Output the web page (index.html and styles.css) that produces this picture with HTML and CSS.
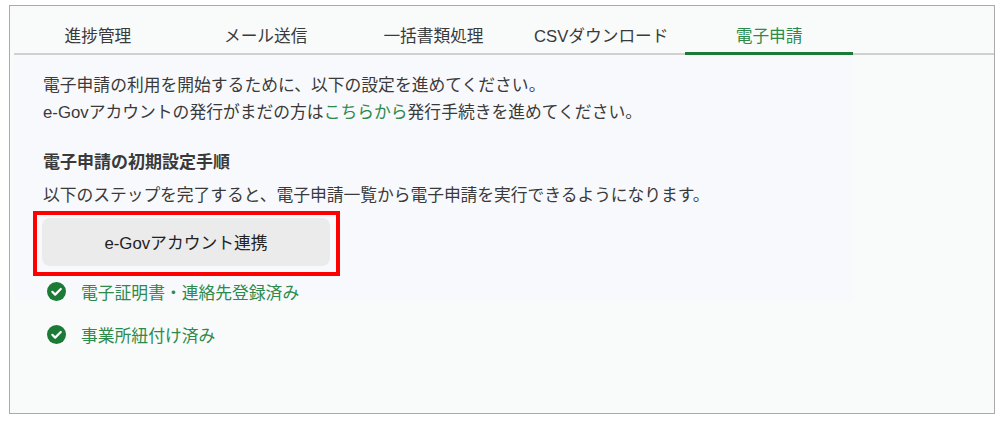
FILE: index.html
```html
<!DOCTYPE html>
<html lang="ja">
<head>
  <meta charset="UTF-8">
  <title>電子申請</title>
  <link rel="stylesheet" href="styles.css">
</head>
<body>
  <div class="frame">
    <div class="tabs">
      <div class="tab">進捗管理</div>
      <div class="tab">メール送信</div>
      <div class="tab">一括書類処理</div>
      <div class="tab">CSVダウンロード</div>
      <div class="tab active">電子申請</div>
    </div>

    <div class="panel">
      <p class="intro">電子申請の利用を開始するために、以下の設定を進めてください。<br>e-Govアカウントの発行がまだの方は<a href="#" class="link">こちらから</a>発行手続きを進めてください。</p>
      <h2 class="heading">電子申請の初期設定手順</h2>
      <p class="desc">以下のステップを完了すると、電子申請一覧から電子申請を実行できるようになります。</p>

      <!-- Red box is the annotation around the button -->
      <div class="highlight">
        <button class="button">e-Govアカウント連携</button>
      </div>

      <ul class="steps">
        <li class="step">
          <svg class="check" viewBox="0 0 20 20"><circle cx="10" cy="10" r="10" fill="#1b7a35"/><path d="M5.6 10.3l3 3 5.9-6" fill="none" stroke="#fff" stroke-width="2.3" stroke-linecap="round" stroke-linejoin="round"/></svg>
          電子証明書・連絡先登録済み
        </li>
        <li class="step">
          <svg class="check" viewBox="0 0 20 20"><circle cx="10" cy="10" r="10" fill="#1b7a35"/><path d="M5.6 10.3l3 3 5.9-6" fill="none" stroke="#fff" stroke-width="2.3" stroke-linecap="round" stroke-linejoin="round"/></svg>
          事業所紐付け済み
        </li>
      </ul>
    </div>
  </div>
</body>
</html>
```

FILE: styles.css
```css
/* General Styles */
body {
  margin: 0;
  background: #ffffff;
  color: #3a3a3a;
  font-family: "Liberation Sans", "Noto Sans CJK JP", sans-serif;
  font-size: 16.8px;
}

/* Outer Frame */
.frame {
  box-sizing: border-box;
  height: 409px;
  margin: 5px 5px 0 9px;
  padding: 0 0 0 4px;
  background: #f9fbfb;
  border: 1px solid #aaaaaa;
}

/* Tabs */
.tabs {
  display: flex;
  box-sizing: border-box;
  height: 49px;
  padding-right: 140px;
  border-bottom: 2px solid #d0d0d0;
}

.tab {
  flex: 0 0 167.8px;
  height: 49px;
  box-sizing: border-box;
  padding-top: 17px;
  font-size: 16.7px;
  line-height: 27px;
  text-align: center;
}

.tab.active {
  color: #2c8a4a;
  border-bottom: 3px solid #1b7a35;
}

/* Content */
.panel {
  box-sizing: border-box;
  width: 839px;
  height: 246px;
  padding: 17px 0 0 29px;
  background: #f8f9fc;
}

.intro {
  margin: 0;
  line-height: 27px;
}

.link {
  color: #2c8a4a;
  text-decoration: none;
}

.heading {
  margin: 23px 0 0;
  font-size: 17px;
  line-height: 27px;
}

.desc {
  margin: 6px 0 0;
  letter-spacing: -0.05px;
  line-height: 27px;
}

/* Highlighted Button */
.highlight {
  box-sizing: border-box;
  width: 307px;
  height: 65px;
  margin: 2px 0 0 -10px;
  padding: 3px 6px 0 5px;
  border: 4px solid #ff0000;
}

.button {
  display: block;
  width: 100%;
  height: 48px;
  padding: 0;
  background: #ebebeb;
  border: none;
  border-radius: 8px;
  color: #222222;
  font: inherit;
}

/* Completed Steps */
.steps {
  margin: 2px 0 0;
  padding: 0 0 0 4px;
  list-style: none;
}

.step {
  display: flex;
  align-items: center;
  gap: 15px;
  height: 27px;
  margin-bottom: 16px;
  color: #2c8a4a;
}

.check {
  width: 19px;
  height: 19px;
}
```
